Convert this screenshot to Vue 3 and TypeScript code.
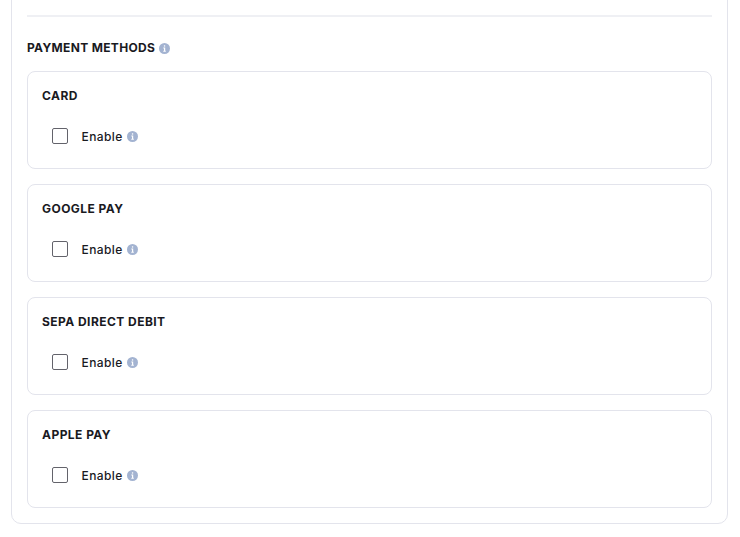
<script setup lang="ts">
const methods: string[] = ['Card', 'Google Pay', 'SEPA Direct Debit', 'Apple Pay']
</script>

<template>
  <div class="page">
    <section class="panel">
      <hr class="divider" />
      <h2 class="heading">
        Payment methods
        <svg class="info" width="11" height="11" viewBox="0 0 11 11">
          <circle cx="5.5" cy="5.5" r="5.5" fill="#a3b3d1" />
          <rect x="4.9" y="2.3" width="1.3" height="1.3" fill="#fff" />
          <path d="M4.3 4.6h1.9v3.2h.6v.9H4.3v-.9h.7V5.5h-.7z" fill="#fff" />
        </svg>
      </h2>
      <div class="methods">
        <div v-for="method in methods" :key="method" class="method">
          <h3 class="method-name">{{ method }}</h3>
          <label class="enable">
            <input type="checkbox" class="check" />
            <span class="enable-text">Enable</span>
            <svg class="info" width="11" height="11" viewBox="0 0 11 11">
              <circle cx="5.5" cy="5.5" r="5.5" fill="#a3b3d1" />
              <rect x="4.9" y="2.3" width="1.3" height="1.3" fill="#fff" />
              <path d="M4.3 4.6h1.9v3.2h.6v.9H4.3v-.9h.7V5.5h-.7z" fill="#fff" />
            </svg>
          </label>
        </div>
      </div>
    </section>
  </div>
</template>

<style scoped>
.page {
  height: 537px;
  overflow: hidden;
  background: #fff;
  padding: 0 12px 0 11px;
  box-sizing: border-box;
  font-family: Inter, "Liberation Sans", sans-serif;
  color: #1a1a1f;
}

.panel {
  margin-top: -20px;
  height: 544px;
  box-sizing: border-box;
  padding: 34px 15px 15px;
  border: 1px solid #e3e4ec;
  border-radius: 10px;
}

.divider {
  height: 2px;
  margin: 0 0 23px;
  border: 0;
  background: #eff0f4;
}

.heading {
  display: flex;
  align-items: center;
  gap: 4px;
  margin: 0 0 15px;
  font-size: 12px;
  line-height: 16px;
  font-weight: 700;
  letter-spacing: 0.33px;
  text-transform: uppercase;
}

.methods {
  display: flex;
  flex-direction: column;
  gap: 15px;
}

.method {
  height: 98px;
  box-sizing: border-box;
  padding: 16px 14px 0;
  border: 1px solid #e3e4ec;
  border-radius: 8px;
}

.method-name {
  margin: 0 0 23px;
  font-size: 12px;
  line-height: 16px;
  font-weight: 700;
  letter-spacing: 0.45px;
  text-transform: uppercase;
}

.enable {
  display: flex;
  align-items: center;
  padding-left: 10px;
  height: 18px;
}

.check {
  appearance: none;
  width: 16px;
  height: 16px;
  margin: 0 13.5px 0 0;
  border: 1px solid #63636b;
  border-radius: 2px;
  background: #fff;
}

.enable-text {
  margin: 2px 4.7px 0 0;
  font-size: 12px;
  font-weight: 500;
  letter-spacing: 0.4px;
  line-height: 16px;
}

.info {
  flex: none;
}
</style>
